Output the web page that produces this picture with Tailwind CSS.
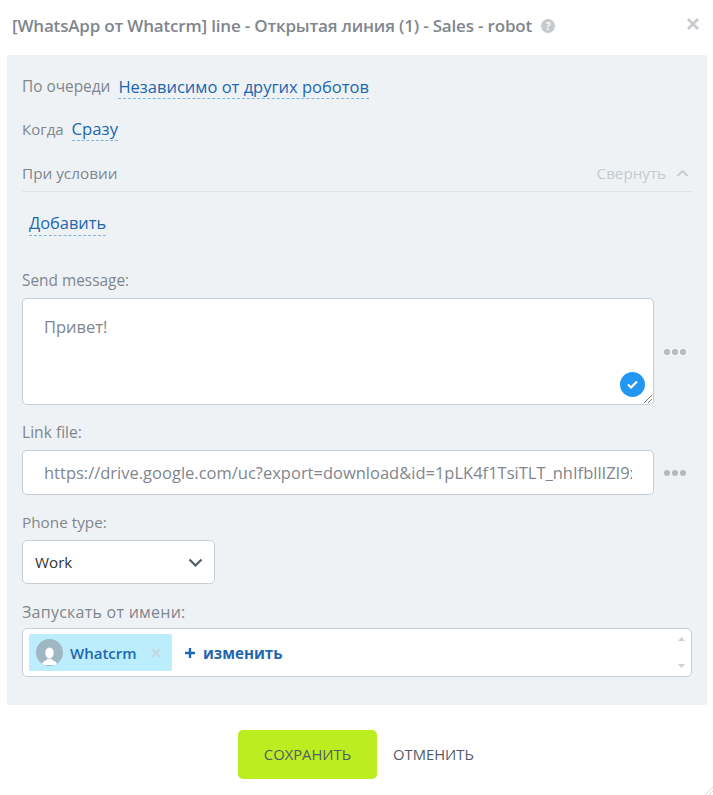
<!DOCTYPE html>
<html lang="ru"><head><meta charset="utf-8">
<script src="https://cdn.jsdelivr.net/npm/@tailwindcss/browser@4"></script>
</head>
<body class="bg-white font-['Open_Sans',sans-serif] overflow-hidden">
<div class="relative w-[713px] h-[795px] flex flex-col">
  <header class="h-[55px] flex items-start pl-3 pr-3 pt-[15px]">
    <h1 class="text-[17px] leading-[22px] font-semibold text-[#80868e] tracking-[-0.18px] whitespace-nowrap">[WhatsApp от Whatcrm] line - Открытая линия (1) - Sales - robot</h1>
    <span class="ml-[9px] mt-[4px] w-[14px] h-[14px] rounded-full bg-[#c6cacd] text-white text-[10px] leading-[14px] font-bold text-center">?</span>
    <svg class="ml-auto mr-[1px] mt-[2px]" width="14" height="14" viewBox="0 0 14 14"><path d="M2 2l10 10M12 2L2 12" stroke="#c6cbd0" stroke-width="2.6"/></svg>
  </header>

  <main class="ml-[7px] w-[700px] h-[650px] bg-[#eef2f4] rounded-[2px] pl-[15px] pr-[15px] flex flex-col">
    <div class="h-[42px] mt-[11px] flex items-center gap-2 text-[15.4px] text-[#80868e]">
      <span>По очереди</span>
      <span class="text-[16.5px] leading-[22px] pt-[1px] text-[#2067b0] border-b border-dashed border-[#7fb3dc]">Независимо от других роботов</span>
    </div>
    <div class="h-[42px] flex items-center gap-2 text-[15px] text-[#80868e]">
      <span>Когда</span>
      <span class="text-[16.7px] leading-[22px] pt-[1px] text-[#2067b0] border-b border-dashed border-[#7fb3dc]">Сразу</span>
    </div>
    <div class="h-[37px] mt-[5px] flex items-center justify-between border-b border-[#dfe3e6] text-[15.3px]">
      <span class="text-[#80868e]">При условии</span>
      <span class="flex items-center gap-[10px] pr-[3px] text-[#c6cbd0]"><span class="text-[15.2px]">Свернуть</span>
        <svg width="13" height="8" viewBox="0 0 13 8"><path d="M1.5 7l5-5 5 5" fill="none" stroke="#c6cbd0" stroke-width="1.8"/></svg>
      </span>
    </div>
    <div class="h-[44px] mt-[10px] flex items-center pl-[7px]">
      <span class="text-[16.4px] leading-[22px] text-[#2067b0] border-b border-dashed border-[#7fb3dc] pb-[1px]">Добавить</span>
    </div>
    <div class="mt-[25px] h-[20px] text-[15.4px] leading-[20px] text-[#80868e]">Send message:</div>
    <div class="mt-[7px] flex items-center">
      <div class="relative w-[632px] h-[107px] bg-white border border-[#c6cdd3] rounded-[5px] pl-[21px] pt-[17px] text-[16.5px] leading-[22px] text-[#80868e]">Привет!
        <span class="absolute right-[8px] bottom-[7px] w-[25px] h-[25px] rounded-full bg-[#2196f3] flex items-center justify-center">
          <svg width="13" height="11" viewBox="0 0 13 11"><path d="M2 5.5l3 3 6-6" fill="none" stroke="#fff" stroke-width="2.2"/></svg>
        </span>
        <svg class="absolute right-[1px] bottom-[1px]" width="9" height="9" viewBox="0 0 9 9"><path d="M1 9l8-8M5 9l4-4" stroke="#777" stroke-width="1"/></svg>
      </div>
      <span class="ml-[10px] flex gap-[2px]"><i class="w-[6px] h-[6px] rounded-full bg-[#b4b9bd]"></i><i class="w-[6px] h-[6px] rounded-full bg-[#b4b9bd]"></i><i class="w-[6px] h-[6px] rounded-full bg-[#b4b9bd]"></i></span>
    </div>
    <div class="mt-[17px] h-[20px] text-[15.6px] leading-[20px] text-[#80868e]">Link file:</div>
    <div class="mt-[8px] flex items-center">
      <div class="w-[632px] h-[45px] bg-white border border-[#c6cdd3] rounded-[5px] pl-[21px] pr-[21px] text-[16.5px] leading-[43px] text-[#80868e]"><div class="overflow-hidden whitespace-nowrap">https://drive.google.com/uc?export=download&amp;id=1pLK4f1TsiTLT_nhIfbllIZI9xQ2</div></div>
      <span class="ml-[10px] flex gap-[2px]"><i class="w-[6px] h-[6px] rounded-full bg-[#b4b9bd]"></i><i class="w-[6px] h-[6px] rounded-full bg-[#b4b9bd]"></i><i class="w-[6px] h-[6px] rounded-full bg-[#b4b9bd]"></i></span>
    </div>
    <div class="mt-[17px] h-[20px] text-[15.3px] leading-[20px] text-[#80868e]">Phone type:</div>
    <div class="mt-[8px] w-[193px] h-[44px] bg-white border border-[#c6cdd3] rounded-[5px] pl-[12px] pr-[11px] flex items-center justify-between text-[15.2px] text-[#333]">
      <span>Work</span>
      <svg width="15" height="9" viewBox="0 0 15 9"><path d="M1.5 1.5l6 6 6-6" fill="none" stroke="#535c69" stroke-width="2.2"/></svg>
    </div>
    <div class="mt-[18px] h-[20px] text-[16px] tracking-[0.25px] leading-[20px] text-[#80868e]">Запускать от имени:</div>
    <div class="relative mt-[6px] w-[670px] h-[49px] bg-white border border-[#c6cdd3] rounded-[5px] pl-[6px] flex items-center">
      <div class="w-[143px] h-[37px] bg-[#bcedfc] rounded-[2px] pl-[7px] flex items-center">
        <span class="w-[27px] h-[27px] rounded-full bg-[#9fb6c3] flex items-end justify-center overflow-hidden">
          <svg width="19" height="21" viewBox="0 0 19 21"><ellipse cx="9.5" cy="8" rx="4.2" ry="5.500" fill="#fff"/><path d="M2 20c0-4 4-4 5.500-6h4c1.500 2 5.500 2 5.500 6z" fill="#fff"/></svg>
        </span>
        <span class="ml-[7px] pt-[1px] text-[15px] font-semibold text-[#1f67b0]">Whatcrm</span>
        <svg class="ml-[14px]" width="10" height="10" viewBox="0 0 10 10"><path d="M1 1l8 8M9 1l-8 8" stroke="#c3d6dd" stroke-width="1.800"/></svg>
      </div>
      <span class="ml-[13px] pt-[2px] flex items-center text-[15.1px] font-bold text-[#1f67b0]"><svg class="mr-[8px]" width="10" height="10" viewBox="0 0 10 10"><path d="M5 0v10M0 5h10" stroke="#1f67b0" stroke-width="2.4"/></svg>изменить</span>
      <svg class="absolute right-[6px] top-[8px]" width="7" height="4" viewBox="0 0 7 4"><path d="M3.500 0l3.500 4H0z" fill="#d0d0d0"/></svg>
      <svg class="absolute right-[6px] bottom-[8px]" width="7" height="4" viewBox="0 0 7 4"><path d="M0 0h7L3.500 4z" fill="#d0d0d0"/></svg>
    </div>
  </main>

  <footer class="mt-[25px] flex items-center pl-[238px]">
    <span class="w-[139px] h-[49px] rounded-[5px] bg-[#bbed21] flex items-center justify-center text-[14.8px] font-medium text-[#535c69]">СОХРАНИТЬ</span>
    <span class="ml-[16px] text-[14.8px] font-medium text-[#535c69]">ОТМЕНИТЬ</span>
  </footer>
  <svg class="absolute right-0 bottom-0" width="8" height="8" viewBox="0 0 8 8"><path d="M0 8l8-8M4 8l4-4" stroke="#d5d8da" stroke-width="1"/></svg>
</div>
</body></html>
